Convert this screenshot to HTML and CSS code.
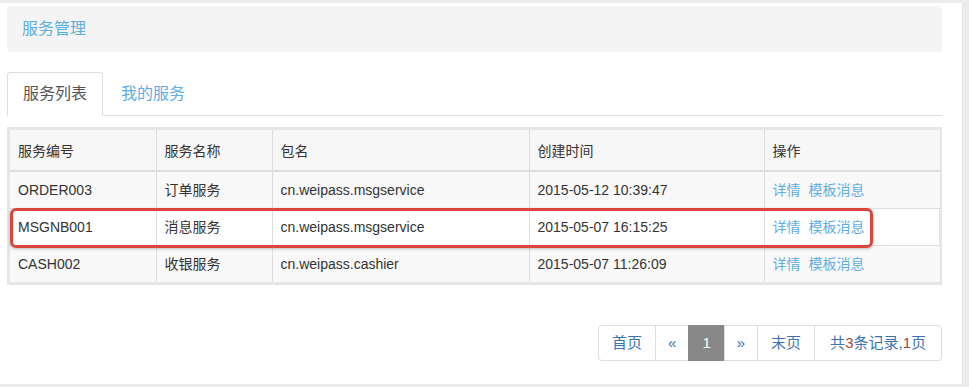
FILE: index.html
```html
<!DOCTYPE html>
<html lang="zh-CN">
  <head>
    <meta charset="UTF-8" />
    <meta name="viewport" content="width=device-width, initial-scale=1.0" />
    <title>服务管理</title>
    <link rel="stylesheet" href="styles.css">
  </head>
  <body>
    <div class="panel">
      <div class="breadcrumb">
        <a href="#">服务管理</a>
      </div>
      <ul class="tabs">
        <li class="active"><a href="#">服务列表</a></li>
        <li><a href="#">我的服务</a></li>
      </ul>
      <div class="table-box">
        <table class="service-table">
          <colgroup>
            <col style="width: 146px" />
            <col style="width: 116px" />
            <col style="width: 257px" />
            <col style="width: 235px" />
            <col style="width: 176px" />
          </colgroup>
          <thead>
            <tr>
              <th>服务编号</th>
              <th>服务名称</th>
              <th>包名</th>
              <th>创建时间</th>
              <th>操作</th>
            </tr>
          </thead>
          <tbody>
            <tr>
              <td>ORDER003</td>
              <td>订单服务</td>
              <td>cn.weipass.msgservice</td>
              <td>2015-05-12 10:39:47</td>
              <td><a href="#">详情</a> <a href="#">模板消息</a></td>
            </tr>
            <tr>
              <td>MSGNB001</td>
              <td>消息服务</td>
              <td>cn.weipass.msgservice</td>
              <td>2015-05-07 16:15:25</td>
              <td><a href="#">详情</a> <a href="#">模板消息</a></td>
            </tr>
            <tr>
              <td>CASH002</td>
              <td>收银服务</td>
              <td>cn.weipass.cashier</td>
              <td>2015-05-07 11:26:09</td>
              <td><a href="#">详情</a> <a href="#">模板消息</a></td>
            </tr>
          </tbody>
        </table>
        <div class="highlight"></div>
      </div>
      <div class="pager">
        <a href="#">首页</a>
        <a href="#" class="arrow">&laquo;</a>
        <span class="current">1</span>
        <a href="#" class="arrow">&raquo;</a>
        <a href="#">末页</a>
        <span class="total">共<em>3</em>条记录,<em>1</em>页</span>
      </div>
    </div>
  </body>
</html>
```
FILE: styles.css
```css
body {
  margin: 0;
  background: #ececec;
  font-family: "Liberation Sans", "Noto Sans CJK SC", sans-serif;
  font-size: 14px;
  color: #333;
}
a {
  text-decoration: none;
}
.panel {
  background: #fff;
  margin: 3px 6px 0 0;
  height: 381px;
  padding: 3px 20px 0 7px;
  box-sizing: border-box;
  border-right: 1px solid #e2e2e2;
}
.breadcrumb {
  height: 46px;
  line-height: 46px;
  background: #f4f4f4;
  border-radius: 4px;
  padding: 0 15px;
  font-size: 16px;
}
.breadcrumb a {
  color: #5eaee2;
}
.tabs {
  list-style: none;
  margin: 20px 0 0;
  padding: 0;
  display: flex;
  border-bottom: 1px solid #ddd;
}
.tabs li {
  margin: 0 2px -1px 0;
}
.tabs a {
  display: block;
  padding: 11px 15px;
  line-height: 20px;
  font-size: 16px;
  color: #5eaee2;
  border: 1px solid transparent;
  border-radius: 4px 4px 0 0;
}
.tabs .active a {
  color: #555;
  background: #fff;
  border-color: #ddd #ddd transparent;
}
.table-box {
  position: relative;
  margin-top: 11px;
  border: 3px solid #e6e6e6;
}
.service-table {
  width: 100%;
  border-collapse: collapse;
  table-layout: fixed;
}
.service-table th,
.service-table td {
  text-align: left;
  padding: 8px;
  line-height: 20px;
  border-left: 1px solid #ddd;
  white-space: nowrap;
}
.service-table th:first-child,
.service-table td:first-child {
  border-left: 0;
}
.service-table th {
  font-weight: normal;
  background: #f7f7f7;
  padding: 11px 8px 9px;
  border-bottom: 2px solid #ddd;
}
.service-table tbody tr + tr td {
  border-top: 1px solid #ddd;
}
.service-table tbody tr:nth-child(odd) {
  background: #f9f9f9;
}
.service-table td a {
  color: #5eaee2;
  margin-right: 4px;
}
.highlight {
  position: absolute;
  left: 0;
  top: 78px;
  width: 863px;
  height: 40px;
  box-sizing: border-box;
  border: 3px solid #d9473c;
  border-radius: 6px;
  box-shadow: 0 1px 3px rgba(0, 0, 0, 0.25);
}
.pager {
  display: flex;
  justify-content: flex-end;
  margin: 40px 0 0 0;
  font-size: 15px;
}
.pager a,
.pager span {
  display: block;
  padding: 8px 13px;
  line-height: 18px;
  color: #3a73b0;
  border: 1px solid #ddd;
  margin-left: -1px;
}
.pager a:first-child {
  border-radius: 4px 0 0 4px;
}
.pager .arrow {
  padding: 8px 12px;
}
.pager .total {
  padding: 8px 15px;
  border-radius: 0 4px 4px 0;
}
.pager .current {
  background: #888;
  border-color: #888;
  color: #fff;
  padding: 8px 13px;
}
.pager em {
  font-style: normal;
  color: #a6433c;
}
```
